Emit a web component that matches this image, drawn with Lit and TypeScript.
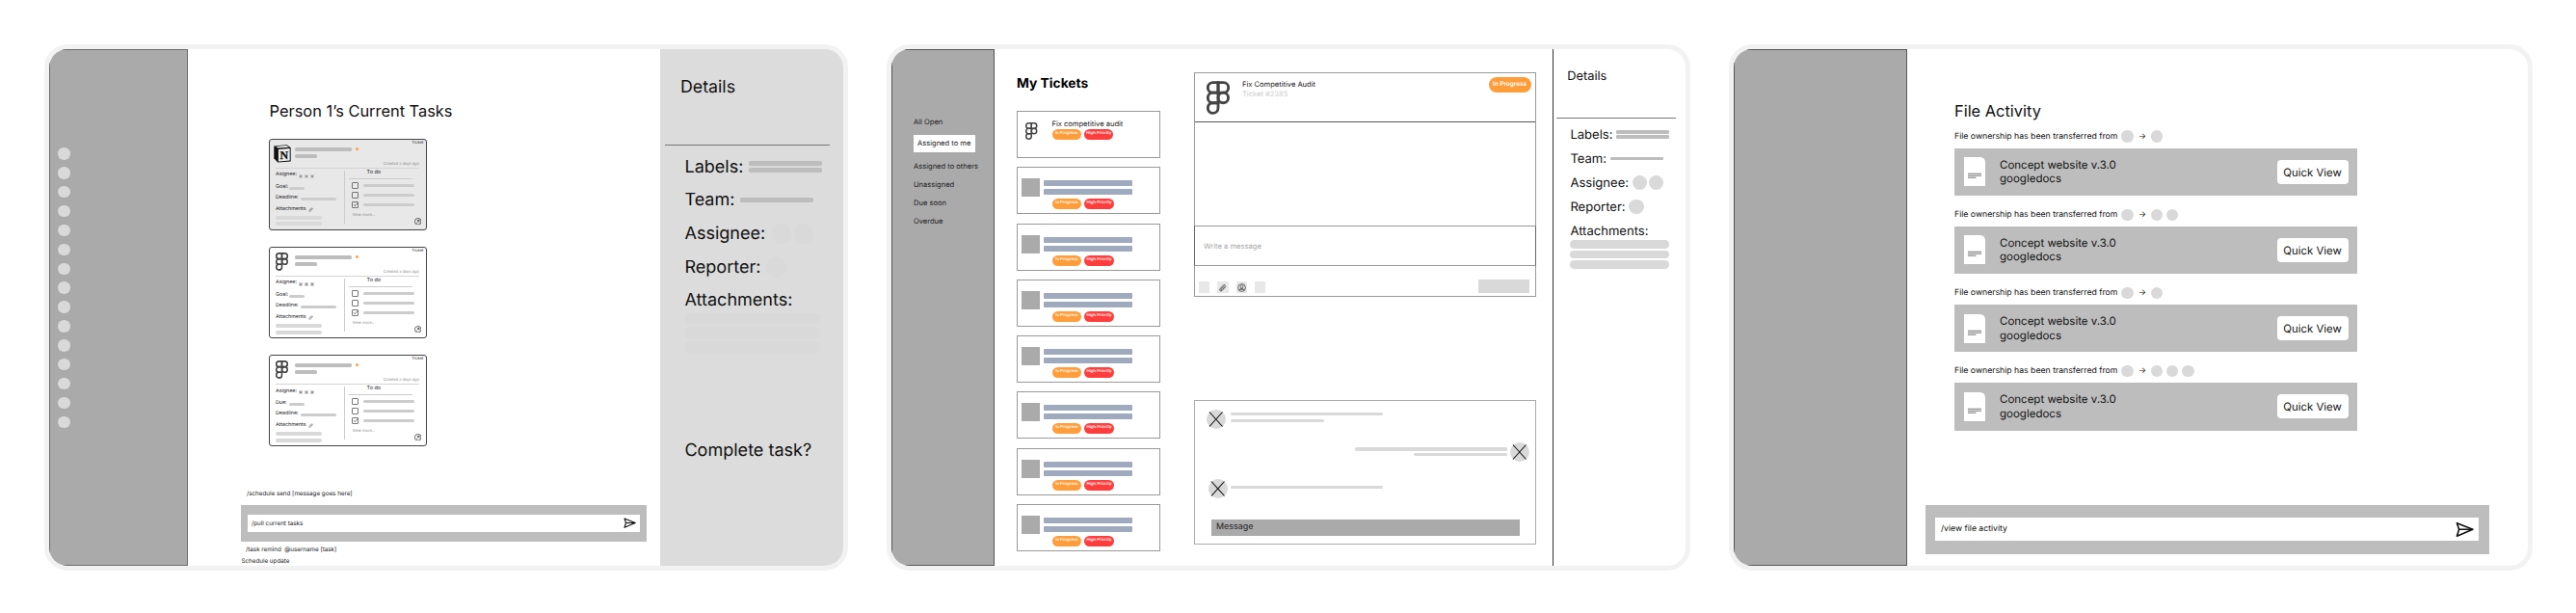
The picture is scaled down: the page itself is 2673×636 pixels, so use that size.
import { LitElement, html, css, svg, nothing } from 'lit';
import { customElement, property } from 'lit/decorators.js';

type TaskCard = {
  app: 'notion' | 'figma';
  goalLabel: string;
};

type FileEvent = {
  recipients: number;
};

const TASKS: TaskCard[] = [
  { app: 'notion', goalLabel: 'Goal:' },
  { app: 'figma', goalLabel: 'Goal:' },
  { app: 'figma', goalLabel: 'Due:' },
];

const FILE_EVENTS: FileEvent[] = [
  { recipients: 1 },
  { recipients: 2 },
  { recipients: 1 },
  { recipients: 3 },
];

const times = (n: number) => Array.from({ length: n }, (_, i) => i);

const figmaIcon = html`
  <svg class="figma" viewBox="0 0 40 58" fill="none" stroke="#444" stroke-width="4.8">
    <path d="M20 2.5H11a8.75 8.75 0 0 0 0 17.6h9z" />
    <path d="M20 2.5h9a8.75 8.75 0 0 1 0 17.6h-9z" />
    <path d="M20 20.1h-9a8.75 8.75 0 0 0 0 17.6h9z" />
    <circle cx="28.8" cy="28.9" r="8.8" />
    <path d="M20 37.7h-9a8.9 8.9 0 1 0 9 8.9z" />
  </svg>
`;

const notionIcon = html`
  <svg class="notion" viewBox="0 0 18 19">
    <path d="M.3 1.6 13.6.3 17.7 3.2V17.4L4.2 18.6.3 14.2z" fill="#111" />
    <path d="M2.2 2 13.3 1 15.8 2.7 4.6 3.6z" fill="#eee" />
    <path d="M4.9 5 16.7 4.1V16.4L4.9 17.4z" fill="#eee" />
    <text x="10.9" y="14.9" text-anchor="middle" font-family="Liberation Serif, serif" font-weight="700" font-size="12" fill="#111" stroke="#111" stroke-width=".3">N</text>
  </svg>
`;

const sendIcon = html`
  <svg class="send" viewBox="0 0 26 22" fill="none" stroke="#111" stroke-width="2.2" stroke-linejoin="round">
    <path d="M2 2 24.5 11 2 20.5 5 11z" />
    <path d="M5 11H24" />
  </svg>
`;

@customElement('ticket-card')
export class TicketCard extends LitElement {
  @property({ type: Object, attribute: false })
  task: TaskCard = TASKS[0];

  static styles = css`
    :host {
      display: block;
      color: #222;
      font-size: 5.33px;
    }

    .card {
      box-sizing: border-box;
      width: 164px;
      height: 95px;
      border: 1px solid #444;
      border-radius: 3px;
      background: #fff;
    }

    .card.notion-card {
      background: #e8e8e8;
    }

    .head {
      box-sizing: border-box;
      display: flex;
      height: 30.5px;
      margin: 0 7px 0 6px;
      border-bottom: 1px solid #d4d4d4;
    }

    .logo {
      flex: 0 0 19.7px;
      padding-top: 5px;
    }

    .figma {
      display: block;
      width: 13px;
      height: 19px;
    }

    .notion {
      display: block;
      width: 18px;
      height: 19px;
      margin-left: -2.5px;
    }

    .titles {
      display: flex;
      flex-direction: column;
      gap: 3.5px;
      padding-top: 8px;
    }

    .title {
      display: flex;
      align-items: center;
      gap: 4px;
      height: 4px;
    }

    .bar {
      height: 4px;
      border-radius: 1.5px;
      background: #bdbdbd;
    }

    .bar.long {
      width: 59px;
    }

    .bar.short {
      width: 23.5px;
    }

    .dot {
      width: 3.4px;
      height: 3.4px;
      border-radius: 50%;
      background: #ff9d3b;
    }

    .meta {
      flex: 1;
      display: flex;
      flex-direction: column;
      justify-content: space-between;
      align-items: flex-end;
      white-space: nowrap;
      line-height: 8px;
    }

    .kind {
      margin-right: -4.5px;
      font-size: 4.25px;
    }

    .created {
      margin-left: -30px;
      font-size: 4.07px;
      color: #888;
    }

    .body {
      display: flex;
      height: 62px;
      margin-left: 6px;
    }

    .fields {
      width: 71px;
    }

    .divider {
      width: 1px;
      height: 55px;
      margin-top: 2px;
      background: #ccc;
    }

    .field {
      display: flex;
      align-items: center;
      white-space: nowrap;
    }

    .field .bar {
      height: 3px;
      margin-top: 3px;
      background: #ccc;
    }

    .people {
      display: flex;
      gap: 2px;
      margin: 3px 0 0 2px;
    }

    .people svg {
      width: 4px;
      height: 4px;
    }

    .who {
      height: 12.6px;
    }

    .goal {
      height: 12px;
    }

    .goal .bar {
      width: 16px;
      margin-left: auto;
      margin-right: 41.3px;
    }

    .deadline {
      height: 10px;
    }

    .deadline .bar {
      width: 37.5px;
      margin-left: 2px;
    }

    .attach {
      height: 14.6px;
    }

    .attach svg {
      width: 5px;
      height: 5px;
      margin: 1px 0 0 2.5px;
    }

    .file {
      width: 48px;
      height: 4px;
      margin-bottom: 2.2px;
      border-radius: 2px;
      background: #d9d9d9;
    }

    .todo {
      flex: 1;
      display: flex;
      flex-direction: column;
      padding: 0 5px 0 3.5px;
    }

    .todo-title {
      box-sizing: border-box;
      width: 66px;
      height: 11px;
      padding-left: 19px;
      border-bottom: 1px solid #ccc;
      font-size: 5.53px;
      line-height: 8.5px;
    }

    .item {
      display: flex;
      align-items: center;
      gap: 4.5px;
      height: 9.4px;
      padding-left: 3.5px;
    }

    .item:nth-of-type(2) {
      margin-top: 2px;
    }

    .item.done {
      height: 11.4px;
    }

    .item svg {
      width: 7px;
      height: 7px;
    }

    .item .bar {
      width: 53.5px;
      height: 3px;
      background: #ccc;
    }

    .foot {
      display: flex;
      justify-content: space-between;
      height: 15px;
      padding-left: 4px;
      font-size: 4.07px;
      line-height: 9px;
      color: #888;
    }

    .foot svg {
      align-self: flex-end;
      width: 7.5px;
      height: 7.5px;
    }
  `;

  private check(done: boolean) {
    return html`
      <svg viewBox="0 0 14 14" fill="none" stroke="#555" stroke-width="1.6">
        <rect x="1" y="1" width="12" height="12" rx="1" />
        ${done ? svg`<path d="M4 6.5 6.5 9.5 13 2" />` : nothing}
      </svg>
    `;
  }

  render() {
    const { app, goalLabel } = this.task;
    return html`
      <div class="card ${app}-card">
        <div class="head">
          <div class="logo">${app === 'notion' ? notionIcon : figmaIcon}</div>
          <div class="titles">
            <div class="title"><span class="bar long"></span><span class="dot"></span></div>
            <div class="bar short"></div>
          </div>
          <div class="meta">
            <span class="kind">Ticket</span>
            <span class="created">Created x days ago</span>
          </div>
        </div>
        <div class="body">
          <div class="fields">
            <div class="field who">
              Asignee:
              <span class="people">
                ${times(3).map(
                  () => html`
                    <svg viewBox="0 0 8 8" stroke="#555" stroke-width="1">
                      <circle cx="4" cy="4" r="4" fill="#d0d0d0" stroke="none" />
                      <path d="M1.2 1.2 6.8 6.8M6.8 1.2 1.2 6.8" />
                    </svg>
                  `
                )}
              </span>
            </div>
            <div class="field goal">${goalLabel}<span class="bar"></span></div>
            <div class="field deadline">Deadline:<span class="bar"></span></div>
            <div class="field attach">
              Attachments
              <svg viewBox="0 0 10 10" fill="none" stroke="#555" stroke-width="1">
                <path d="M2 8.5C.5 7 1.5 5.5 3 4.5L6.5 1.8C8 .8 9.5 2.5 8.2 4L4.8 8C4 9.2 2.8 9.3 2 8.5zM3.5 7 7 3.2" />
              </svg>
            </div>
            <div class="file"></div>
            <div class="file"></div>
          </div>
          <div class="divider"></div>
          <div class="todo">
            <div class="todo-title">To do</div>
            <div class="item">${this.check(false)}<span class="bar"></span></div>
            <div class="item">${this.check(false)}<span class="bar"></span></div>
            <div class="item done">${this.check(true)}<span class="bar"></span></div>
            <div class="foot">
              <span>View more...</span>
              <svg viewBox="0 0 15 15" fill="none" stroke="#333" stroke-width="1.5">
                <circle cx="7.5" cy="7.5" r="6.6" />
                <path d="M4.8 10.2 10 5M5.8 4.9H10.1V9.2" />
              </svg>
            </div>
          </div>
        </div>
      </div>
    `;
  }
}

// All lengths are in em, so the panel scales with the font size of its host.
@customElement('details-panel')
export class DetailsPanel extends LitElement {
  @property({ type: Boolean })
  complete = false;

  static styles = css`
    :host {
      display: block;
      color: #111;
    }

    h2 {
      margin: 0;
      padding-left: 1.18em;
      font-size: 0.985em;
      font-weight: 400;
      line-height: 4.54em;
    }

    .rule {
      width: 9.48em;
      height: 1px;
      margin: 1em 0 0.28em 0.294em;
      background: #777;
    }

    .row {
      display: flex;
      align-items: center;
      gap: 0.3em;
      height: 1.92em;
      padding-left: 1.41em;
      white-space: nowrap;
    }

    .lines {
      display: flex;
      flex-direction: column;
      gap: 0.12em;
    }

    .line {
      width: 4.22em;
      height: 0.28em;
      border-radius: 0.1em;
      background: #bdbdbd;
    }

    .people {
      display: flex;
      gap: 0.13em;
    }

    .person {
      width: 1.17em;
      height: 1.17em;
      border-radius: 50%;
      background: #d9d9d9;
    }

    .files {
      display: flex;
      flex-direction: column;
      gap: 0.16em;
      margin: -0.25em 0 4.64em 1.41em;
    }

    .file {
      width: 7.87em;
      height: 0.66em;
      border-radius: 0.33em;
      background: #d9d9d9;
    }
  `;

  render() {
    return html`
      <h2>Details</h2>
      <div class="rule"></div>
      <div class="row">
        Labels:
        <span class="lines"><span class="line"></span><span class="line"></span></span>
      </div>
      <div class="row">Team: <span class="line"></span></div>
      <div class="row">
        Assignee:
        <span class="people"><span class="person"></span><span class="person"></span></span>
      </div>
      <div class="row">Reporter: <span class="person"></span></div>
      <div class="row">Attachments:</div>
      <div class="files">${times(3).map(() => html`<span class="file"></span>`)}</div>
      ${this.complete ? html`<div class="row">Complete task?</div>` : nothing}
    `;
  }
}

@customElement('tasks-screen')
export class TasksScreen extends LitElement {
  static styles = css`
    :host {
      display: flex;
      height: 100%;
    }

    .rail {
      box-sizing: border-box;
      display: flex;
      flex-direction: column;
      gap: 7.4px;
      width: 144px;
      padding: 101.2px 0 0 8.4px;
      border: 1px solid #6b6b6b;
      background: #aaa;
    }

    .rail span {
      width: 12.5px;
      height: 12.5px;
      border-radius: 50%;
      background: #d9d9d9;
    }

    main {
      flex: 1;
      display: flex;
      flex-direction: column;
      color: #222;
    }

    h1 {
      margin: 54px 0 18.6px 84.6px;
      font-size: 16.4px;
      font-weight: 400;
      line-height: 20px;
      color: #111;
    }

    .cards {
      display: flex;
      flex-direction: column;
      gap: 17.1px;
      margin-left: 84px;
    }

    .commands {
      margin: auto 14px 0 55px;
      font-size: 6.25px;
    }

    .hint {
      height: 24px;
      padding-left: 6px;
      line-height: 24px;
      white-space: pre;
    }

    .hint.after {
      height: 16.8px;
      padding-left: 5px;
      line-height: 16.8px;
    }

    .hint.last {
      height: 8.6px;
      padding-left: 0.5px;
      line-height: 9px;
    }

    .bar {
      padding: 9.5px 7px 10px;
      background: #bdbdbd;
    }

    .input {
      display: flex;
      align-items: center;
      justify-content: space-between;
      height: 18px;
      padding: 0 4px;
      background: #fff;
    }

    .send {
      width: 13px;
      height: 11px;
    }

    details-panel {
      width: 190px;
      font-size: 18.05px;
      background: #dcdcdc;
    }
  `;

  render() {
    return html`
      <div class="rail">${times(15).map(() => html`<span></span>`)}</div>
      <main>
        <h1>Person 1’s Current Tasks</h1>
        <div class="cards">
          ${TASKS.map((task) => html`<ticket-card .task=${task}></ticket-card>`)}
        </div>
        <div class="commands">
          <div class="hint">/schedule send [message goes here]</div>
          <div class="bar">
            <div class="input"><span>/pull current tasks</span>${sendIcon}</div>
          </div>
          <div class="hint after">/task remind  @username [task]</div>
          <div class="hint last">Schedule update</div>
        </div>
      </main>
      <details-panel complete></details-panel>
    `;
  }
}

@customElement('tickets-screen')
export class TicketsScreen extends LitElement {
  static styles = css`
    :host {
      display: flex;
      height: 100%;
      color: #222;
      font-size: 7.55px;
    }

    nav {
      box-sizing: border-box;
      display: flex;
      flex-direction: column;
      align-items: flex-start;
      width: 107px;
      padding: 65px 0 0 22px;
      border: 1px solid #555;
      background: #aaa;
      line-height: 19px;
      white-space: nowrap;
    }

    nav .active {
      width: 60px;
      height: 18px;
      margin: 4px 0 5px;
      padding-left: 4px;
      background: #fff;
      line-height: 18px;
    }

    .list {
      width: 149.5px;
      margin-left: 22.5px;
    }

    h1 {
      margin: 25.5px 0 18.5px;
      padding-left: 0.5px;
      font-size: 13.8px;
      font-weight: 700;
      line-height: 20px;
      color: #000;
    }

    .tickets {
      display: flex;
      flex-direction: column;
      gap: 9.3px;
    }

    .ticket {
      box-sizing: border-box;
      display: flex;
      height: 49px;
      padding-left: 4.5px;
      border: 1px solid #999;
    }

    .ticket .figma {
      flex: none;
      width: 12.5px;
      height: 18px;
      margin: 11.3px 15px 0 4px;
    }

    .thumb {
      width: 19px;
      height: 19px;
      margin: 11px 3.5px 0 0;
      background: #aaa;
    }

    .info {
      display: flex;
      flex-direction: column;
      padding-top: 13px;
    }

    .info.named {
      padding-top: 8px;
    }

    .name {
      line-height: 10.4px;
    }

    .line {
      width: 92.6px;
      height: 6px;
      margin-bottom: 3px;
      border-radius: 1px;
      background: #a0aabf;
    }

    .pills {
      display: flex;
      gap: 3.3px;
      padding: 1px 0 0 9.3px;
    }

    .named .pills {
      padding: 0;
    }

    .pill {
      width: 30.3px;
      height: 11px;
      border-radius: 6px;
      background: #ff9d3b;
      color: #fff;
      font-size: 4.3px;
      font-weight: 600;
      line-height: 10.6px;
      text-align: center;
      white-space: nowrap;
    }

    .pill.high {
      background: #ff3d3d;
    }

    .pill.large {
      width: 44px;
      height: 15.5px;
      margin: 4px 4.5px 0 auto;
      border-radius: 8px;
      font-size: 6.45px;
      line-height: 15.5px;
    }

    main {
      display: flex;
      flex-direction: column;
      justify-content: space-between;
      width: 355px;
      margin: 24px 17px 22px 35px;
    }

    .thread,
    .chat {
      box-sizing: border-box;
      border: 1px solid #9a9a9a;
    }

    .thread {
      height: 233px;
    }

    .thread-head {
      box-sizing: border-box;
      display: flex;
      height: 51px;
      padding-left: 12px;
      border-bottom: 1px solid #555;
    }

    .thread-head .figma {
      width: 24px;
      height: 35px;
      margin: 8px 13px 0 0;
    }

    .thread-title {
      padding-top: 6.8px;
      line-height: 10.4px;
    }

    .muted {
      color: #ccc;
    }

    .compose {
      box-sizing: border-box;
      height: 41.5px;
      margin: 107px -1px 0;
      padding-left: 9px;
      border: 1px solid #666;
      border-top-color: #999;
      border-bottom-color: #999;
      color: #aaa;
      font-size: 7.6px;
      line-height: 41px;
    }

    .tools {
      display: flex;
      gap: 8px;
      padding: 16.5px 6px 0 4px;
    }

    .tool {
      width: 11.3px;
      height: 12px;
      background: #e8e8e8;
    }

    .tool svg {
      display: block;
      width: 9px;
      height: 9px;
      margin: 1.5px auto 0;
    }

    .submit {
      width: 53px;
      height: 14px;
      margin: -2px 0 0 auto;
      background: #d9d9d9;
    }

    .chat {
      display: flex;
      flex-direction: column;
      height: 150px;
      padding: 8.5px 6px 0 11.5px;
      border-color: #aaa;
    }

    .msg {
      display: flex;
      gap: 5.5px;
      height: 34.3px;
    }

    .msg.mine {
      flex-direction: row-reverse;
      gap: 3.4px;
      height: 38.4px;
    }

    .msg.last {
      height: 42px;
      padding-left: 2px;
      gap: 3.5px;
    }

    .avatar {
      width: 20px;
      height: 20px;
    }

    .lines {
      display: flex;
      flex-direction: column;
      gap: 3.4px;
      padding-top: 3.6px;
    }

    .mine .lines {
      align-items: flex-end;
      gap: 2.2px;
      padding-top: 5.5px;
    }

    .last .lines {
      padding-top: 7px;
    }

    .lines span {
      width: 158px;
      height: 3.3px;
      border-radius: 1.6px;
      background: #d9d9d9;
    }

    .lines .short {
      width: 96.5px;
    }

    .message {
      box-sizing: border-box;
      width: 320px;
      height: 16.5px;
      margin-left: 5.5px;
      padding-left: 5px;
      background: #aaa;
      font-size: 8.95px;
      line-height: 15px;
    }

    details-panel {
      flex: 1;
      font-size: 13.05px;
      box-shadow: inset 1px 0 #333;
    }
  `;

  private pills() {
    return html`
      <div class="pills">
        <span class="pill">In Progress</span>
        <span class="pill high">High Priority</span>
      </div>
    `;
  }

  private avatar() {
    return html`
      <svg class="avatar" viewBox="0 0 20 20">
        <circle cx="10" cy="10" r="10" fill="#d9d9d9" />
        <path d="M3 2.5 16.5 17.5M16.5 2.5 3 17.5" stroke="#111" stroke-width="1.1" />
      </svg>
    `;
  }

  render() {
    return html`
      <nav>
        <span>All Open</span>
        <span class="active">Assigned to me</span>
        <span>Assigned to others</span>
        <span>Unassigned</span>
        <span>Due soon</span>
        <span>Overdue</span>
      </nav>
      <section class="list">
        <h1>My Tickets</h1>
        <div class="tickets">
          <div class="ticket">
            ${figmaIcon}
            <div class="info named">
              <span class="name">Fix competitive audit</span>
              ${this.pills()}
            </div>
          </div>
          ${times(7).map(
            () => html`
              <div class="ticket">
                <div class="thumb"></div>
                <div class="info">
                  <span class="line"></span>
                  <span class="line"></span>
                  ${this.pills()}
                </div>
              </div>
            `
          )}
        </div>
      </section>
      <main>
        <div class="thread">
          <div class="thread-head">
            ${figmaIcon}
            <div class="thread-title">
              <div>Fix Competitive Audit</div>
              <div class="muted">Ticket #2385</div>
            </div>
            <span class="pill large">In Progress</span>
          </div>
          <div class="compose">Write a message</div>
          <div class="tools">
            <span class="tool"></span>
            <span class="tool">
              <svg viewBox="0 0 18 18" fill="none" stroke="#222" stroke-width="1.3">
                <path d="M15.5 7 8 15.2C5.5 17.6 1.6 14.4 3.8 11.6L10.8 3.6C12.8 1.4 16 4 14.2 6.4L8 13.2C6.6 14.6 4.8 13 6 11.5L12 5" />
              </svg>
            </span>
            <span class="tool">
              <svg viewBox="0 0 18 18" fill="none" stroke="#222" stroke-width="1.3">
                <circle cx="9" cy="9" r="7.8" />
                <circle cx="9" cy="7" r="3" />
                <path d="M3.6 14.2C5 10.8 13 10.8 14.4 14.2M5.5 12H12.5" />
              </svg>
            </span>
            <span class="tool"></span>
            <span class="submit"></span>
          </div>
        </div>
        <div class="chat">
          <div class="msg">
            ${this.avatar()}
            <div class="lines"><span></span><span class="short"></span></div>
          </div>
          <div class="msg mine">
            ${this.avatar()}
            <div class="lines"><span></span><span class="short"></span></div>
          </div>
          <div class="msg last">
            ${this.avatar()}
            <div class="lines"><span></span></div>
          </div>
          <div class="message">Message</div>
        </div>
      </main>
      <details-panel></details-panel>
    `;
  }
}

@customElement('files-screen')
export class FilesScreen extends LitElement {
  static styles = css`
    :host {
      display: flex;
      height: 100%;
      color: #111;
    }

    .side {
      box-sizing: border-box;
      width: 180px;
      border: 1px solid #555;
      background: #aaa;
    }

    main {
      flex: 1;
      display: flex;
      flex-direction: column;
    }

    .activity {
      width: 418px;
      margin-left: 49px;
    }

    h1 {
      margin: 54px 0 5px;
      font-size: 16.4px;
      font-weight: 400;
      line-height: 20px;
    }

    .event {
      height: 81.2px;
    }

    .transfer {
      display: flex;
      align-items: center;
      gap: 4px;
      height: 23px;
      padding-bottom: 0.5px;
      font-size: 8.7px;
      white-space: nowrap;
    }

    .arrow {
      width: 10.4px;
      text-align: center;
    }

    .person {
      width: 12.2px;
      height: 12.2px;
      border-radius: 50%;
      background: #d9d9d9;
    }

    .file {
      display: flex;
      align-items: center;
      height: 49.6px;
      padding: 0 9.5px;
      background: #bdbdbd;
      font-size: 11.5px;
      line-height: 14.4px;
    }

    .doc {
      width: 22px;
      height: 30px;
      margin-right: 15.5px;
    }

    .quick {
      width: 74px;
      height: 25px;
      margin-left: auto;
      border-radius: 4px;
      background: #fff;
      font-size: 11.4px;
      line-height: 26px;
      text-align: center;
    }

    .command {
      margin: auto 40.3px 12px 19px;
      padding: 13.3px 11px 13.7px 10px;
      background: #bdbdbd;
    }

    .input {
      display: flex;
      align-items: center;
      justify-content: space-between;
      height: 24.3px;
      padding: 0 5px 0 6px;
      background: #fff;
      font-size: 8.67px;
    }

    .send {
      width: 19px;
      height: 16.5px;
    }
  `;

  render() {
    return html`
      <div class="side"></div>
      <main>
        <div class="activity">
          <h1>File Activity</h1>
          ${FILE_EVENTS.map(
            (event) => html`
              <div class="event">
                <div class="transfer">
                  File ownership has been transferred from
                  <span class="person"></span>
                  <span class="arrow">→</span>
                  ${times(event.recipients).map(() => html`<span class="person"></span>`)}
                </div>
                <div class="file">
                  <svg class="doc" viewBox="0 0 22 30">
                    <path d="M0 0H16.5Q22 0 22 6V30H0z" fill="#fff" />
                    <path d="M4 17.2H18M4 19.2H18M4 21.2H12.5" stroke="#777" stroke-width="1.1" />
                  </svg>
                  <div>Concept website v.3.0<br />googledocs</div>
                  <div class="quick">Quick View</div>
                </div>
              </div>
            `
          )}
        </div>
        <div class="command">
          <div class="input"><span>/view file activity</span>${sendIcon}</div>
        </div>
      </main>
    `;
  }
}

@customElement('app-root')
export class AppRoot extends LitElement {
  static styles = css`
    :host {
      box-sizing: border-box;
      display: flex;
      gap: 40px;
      height: 636px;
      padding: 46px;
      background: #fff;
      font-family: Inter, 'Liberation Sans', sans-serif;
      text-rendering: geometricPrecision;
    }

    .frame {
      box-sizing: border-box;
      flex: none;
      width: 834px;
      height: 546px;
      overflow: hidden;
      border: 5px solid #f2f2f2;
      border-radius: 24px;
      background: #fff;
    }
  `;

  render() {
    return html`
      <div class="frame"><tasks-screen></tasks-screen></div>
      <div class="frame"><tickets-screen></tickets-screen></div>
      <div class="frame"><files-screen></files-screen></div>
    `;
  }
}
